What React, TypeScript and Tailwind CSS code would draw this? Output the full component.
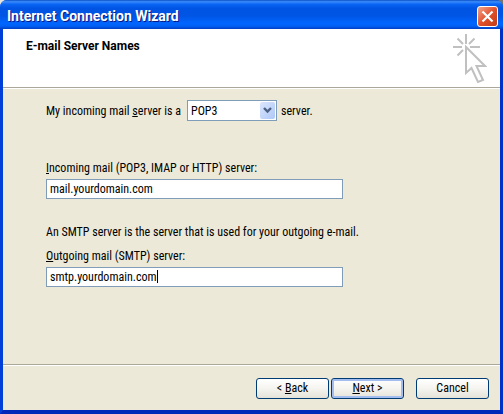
import { useState } from "react";

const fieldClass =
  "block h-5 w-full border border-[#7f9db9] bg-white px-[3px] text-[12px] leading-4 text-black outline-none";

const buttonClass =
  "h-[21px] w-[73px] rounded-[3px] border border-[#003c74] bg-linear-to-b from-white via-[#f5f4ef] to-[#e4e2d8] text-[12px] leading-4 text-black";

function WizardCursor() {
  return (
    <svg width="34" height="52" viewBox="0 0 34 52" fill="none" stroke="#c0c0c0" strokeWidth="2" aria-hidden="true">
      <path d="M13 1v10M0 14h9M17 14h10M4.500 5.500l5.500 5.500M21.500 5.500L16 11M4.500 22.500L10 17" />
      <path d="M13 14v26l5.500-5L25 49l5-2-6.500-14H32z" />
    </svg>
  );
}

export default function App() {
  const [protocol, setProtocol] = useState("POP3");
  const [incoming, setIncoming] = useState("mail.yourdomain.com");
  const [outgoing, setOutgoing] = useState("smtp.yourdomain.com");

  return (
    <div className="bg-linear-to-r from-[#e8e6dc] to-[#77746a] font-['Roboto_Condensed','Liberation_Sans',sans-serif] text-[12px] leading-4 text-black">
      <div className="flex min-h-screen flex-col overflow-hidden rounded-t-[7px] bg-[#0a50e8]">
        <header className="flex h-[29px] items-center justify-between bg-[linear-gradient(180deg,#0a4fc8_0%,#3c8cfa_6%,#0a66f5_14%,#0054e3_28%,#0055e5_55%,#0066ff_80%,#0060f5_90%,#003fc4_100%)] pt-[3px] pr-[5px] pl-[7px]">
          <h1 className="font-['Roboto',sans-serif] text-[14px] leading-5 font-bold text-white [text-shadow:1px_1px_#0a1883]">
            Internet Connection Wizard
          </h1>
          <button
            type="button"
            aria-label="Close"
            className="flex size-[21px] items-center justify-center rounded-[3px] border border-white bg-linear-to-br from-[#f0a48c] via-[#e0502c] to-[#c03c14]"
          >
            <svg width="13" height="13" viewBox="0 0 13 13" stroke="white" strokeWidth="2.2" aria-hidden="true">
              <path d="M1.500 1.500l10 10M11.500 1.500l-10 10" />
            </svg>
          </button>
        </header>

        <div className="flex grow flex-col border-x-[3px] border-b-4 border-[#0040d8] border-r-[#0032c8] border-b-[#0028b8] bg-[#ece9d8]">
          <div className="flex h-[59px] justify-between border-b border-[#aca899] bg-white pt-1 pr-[13px] pl-[23px]">
            <h2 className="pt-[3px] font-['Roboto',sans-serif] text-[12px] leading-5 font-bold">E-mail Server Names</h2>
            <WizardCursor />
          </div>

          <main className="grow border-t border-white px-[43px] pt-[11px]">
            <div className="flex h-[21px] items-center">
              <label htmlFor="protocol" className="w-[141px] whitespace-nowrap">
                My incoming mail <u>s</u>erver is a
              </label>
              <div className="relative w-[90px]">
                <select
                  id="protocol"
                  value={protocol}
                  onChange={(e) => setProtocol(e.target.value)}
                  className="block h-[21px] w-full appearance-none border border-[#7f9db9] bg-white pr-5 pl-[3px] text-[12px] leading-4 outline-none"
                >
                  <option>POP3</option>
                  <option>IMAP</option>
                  <option>HTTP</option>
                </select>
                <span className="pointer-events-none absolute inset-y-0.5 right-0.5 flex w-[15px] items-center justify-center rounded-xs bg-linear-to-br from-[#dce6fd] to-[#aec8f7]">
                  <svg width="9" height="7" viewBox="0 0 9 7" fill="none" stroke="#4d6185" strokeWidth="2.4" aria-hidden="true">
                    <path d="M1 1l3.500 3.500L8 1" />
                  </svg>
                </span>
              </div>
              <span className="pl-1">server.</span>
            </div>

            <div className="w-[297px] max-w-full pt-[39px]">
              <label htmlFor="incoming" className="block pb-[3px]">
                <u>I</u>ncoming mail (POP3, IMAP or HTTP) server:
              </label>
              <input
                id="incoming"
                type="text"
                value={incoming}
                onChange={(e) => setIncoming(e.target.value)}
                className={fieldClass}
              />
            </div>

            <p className="pt-[25px]">An SMTP server is the server that is used for your outgoing e-mail.</p>

            <div className="w-[297px] max-w-full pt-2">
              <label htmlFor="outgoing" className="block pb-[3px]">
                <u>O</u>utgoing mail (SMTP) server:
              </label>
              <div className="relative">
                <input
                  id="outgoing"
                  type="text"
                  value={outgoing}
                  onChange={(e) => setOutgoing(e.target.value)}
                  className={`${fieldClass} caret-transparent`}
                />
                <span className="pointer-events-none absolute top-[3px] left-[111px] h-[13px] w-px bg-black" />
              </div>
            </div>
          </main>

          <footer className="border-t border-[#aca899]">
            <div className="flex h-[45px] items-center justify-end border-t border-white pr-[11px]">
              <button type="button" className={buttonClass}>
                &lt; <u>B</u>ack
              </button>
              <button type="button" className={`${buttonClass} ml-0.5 shadow-[inset_0_0_0_2px_#a3bdf0]`}>
                <u>N</u>ext &gt;
              </button>
              <button type="button" className={`${buttonClass} ml-3`}>
                Cancel
              </button>
            </div>
          </footer>
        </div>
      </div>
    </div>
  );
}
